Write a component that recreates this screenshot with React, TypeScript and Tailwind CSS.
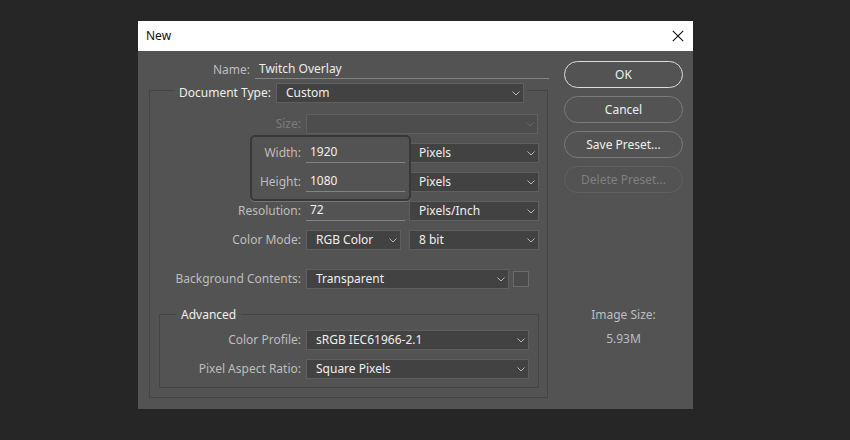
import React from "react";

function Chevron({ muted }: { muted?: boolean }) {
  return (
    <svg width="8" height="5" viewBox="0 0 8 5" className="shrink-0" fill="none" stroke={muted ? "#686868" : "#c4c4c4"} strokeWidth="0.9">
      <path d="M0.5 0.5 L4 4 L7.5 0.5" />
    </svg>
  );
}

function Select({ value, className, disabled }: { value?: string; className: string; disabled?: boolean }) {
  return (
    <div className={`${className} h-[20px] flex items-center justify-between shrink-0 border border-[#5f5f5f] pl-[9px] pr-[3px] ${disabled ? "bg-[#4d4d4d]" : "bg-[#424242]"} text-[#efefef]`}>
      <span>{value}</span>
      <Chevron muted={disabled} />
    </div>
  );
}

function Field({ value, className }: { value: string; className: string }) {
  return (
    <div className={`${className} h-[20px] shrink-0 border-b border-[#838383] pl-[4px] text-[#f0f0f0] leading-[17px]`}>{value}</div>
  );
}

function Label({ children, className = "w-[146px]", tone = "text-[#bdbdbd]" }: { children: React.ReactNode; className?: string; tone?: string }) {
  return <div className={`${className} shrink-0 text-right pr-[5px] ${tone}`}>{children}</div>;
}

function Button({ children, tone }: { children: string; tone: string }) {
  return (
    <div className={`h-[27px] w-[119px] rounded-full border flex items-center justify-center ${tone}`}>{children}</div>
  );
}

export default function App() {
  return (
    <div
      className="h-[440px] w-[850px] overflow-hidden whitespace-nowrap bg-[#262626] pt-[21px] pl-[138px] text-[12px]"
      style={{ fontFamily: '"Noto Sans", sans-serif' }}
    >
      <div className="h-[388px] w-[555px] bg-[#535353]">
        <div className="flex h-[30px] items-center justify-between bg-white pl-[8px] pr-[9px] text-[#111111]">
          <span>New</span>
          <svg width="12" height="12" viewBox="0 0 12 12" stroke="#111111" strokeWidth="1.1" fill="none">
            <path d="M0.8 0.8 L11.2 11.2 M11.2 0.8 L0.8 11.2" />
          </svg>
        </div>
        <div className="flex pl-[11px] pt-[10px]">
          <div className="w-[400px] shrink-0">
            <div className="flex items-center">
              <Label className="w-[106px]">Name:</Label>
              <div className="h-[18px] w-[294px] border-b border-[#838383] pl-[4px] text-[#ececec] leading-[16px]">Twitch Overlay</div>
            </div>
            <div className="mt-[11px] h-[308px] w-[399px] border border-[#444444]">
              <div className="ml-[24px] -mt-[8px] flex w-[353px] items-center bg-[#535353] pl-[5px]">
                <div className="w-[92px] shrink-0 text-[#efefef]">Document Type:</div>
                <Select value="Custom" className="ml-[5px] w-[248px]" />
              </div>
              <div className="relative mt-[11px] flex flex-col gap-[9px]">
                <div className="flex items-center">
                  <Label tone="text-[#7c7c7c]" className="w-[156px]">Size:</Label>
                  <Select className="w-[232px]" disabled />
                </div>
                <div className="flex items-center">
                  <Label className="w-[156px]">Width:</Label>
                  <Field value="1920" className="w-[99px]" />
                  <Select value="Pixels" className="ml-[4px] w-[130px]" />
                </div>
                <div className="flex items-center">
                  <Label className="w-[156px]">Height:</Label>
                  <Field value="1080" className="w-[99px]" />
                  <Select value="Pixels" className="ml-[4px] w-[130px]" />
                </div>
                <div className="flex items-center">
                  <Label className="w-[156px]">Resolution:</Label>
                  <Field value="72" className="w-[99px]" />
                  <Select value="Pixels/Inch" className="ml-[4px] w-[130px]" />
                </div>
                <div className="flex items-center">
                  <Label className="w-[156px]">Color Mode:</Label>
                  <Select value="RGB Color" className="w-[95px]" />
                  <Select value="8 bit" className="ml-[8px] w-[130px]" />
                </div>
                <div className="mt-[10px] flex items-center">
                  <Label className="w-[156px]">Background Contents:</Label>
                  <Select value="Transparent" className="w-[203px]" />
                  <div className="ml-[4px] h-[16px] w-[16px] border border-[#6b6b6b] bg-[#4b4b4b]" />
                </div>
                <div className="absolute left-[100px] top-[21px] h-[66px] w-[161px] rounded-[5px] border-2 border-[#383838] shadow-[0_1px_0_#767676]" />
              </div>
              <div className="ml-[9px] mt-[25px] h-[74px] w-[380px] border border-[#444444]">
                <div className="ml-[16px] -mt-[9px] w-fit bg-[#535353] px-[5px] text-[#efefef]">Advanced</div>
                <div className="mt-[6px] flex flex-col gap-[9px]">
                  <div className="flex items-center">
                    <Label>Color Profile:</Label>
                    <Select value="sRGB IEC61966-2.1" className="w-[223px]" />
                  </div>
                  <div className="flex items-center">
                    <Label>Pixel Aspect Ratio:</Label>
                    <Select value="Square Pixels" className="w-[223px]" />
                  </div>
                </div>
              </div>
            </div>
          </div>
          <div className="ml-[15px] w-[119px] shrink-0">
            <div className="flex flex-col gap-[8px]">
              <Button tone="border-[#dcdcdc] text-[#f0f0f0] border-[1.5px]">OK</Button>
              <Button tone="border-[#7a7a7a] text-[#efefef]">Cancel</Button>
              <Button tone="border-[#7a7a7a] text-[#efefef]">Save Preset...</Button>
              <Button tone="border-[#616161] text-[#7f7f7f]">Delete Preset...</Button>
            </div>
            <div className="mt-[113px] text-center text-[#bdbdbd]">Image Size:</div>
            <div className="mt-[6px] text-center text-[#bdbdbd]">5.93M</div>
          </div>
        </div>
      </div>
    </div>
  );
}
